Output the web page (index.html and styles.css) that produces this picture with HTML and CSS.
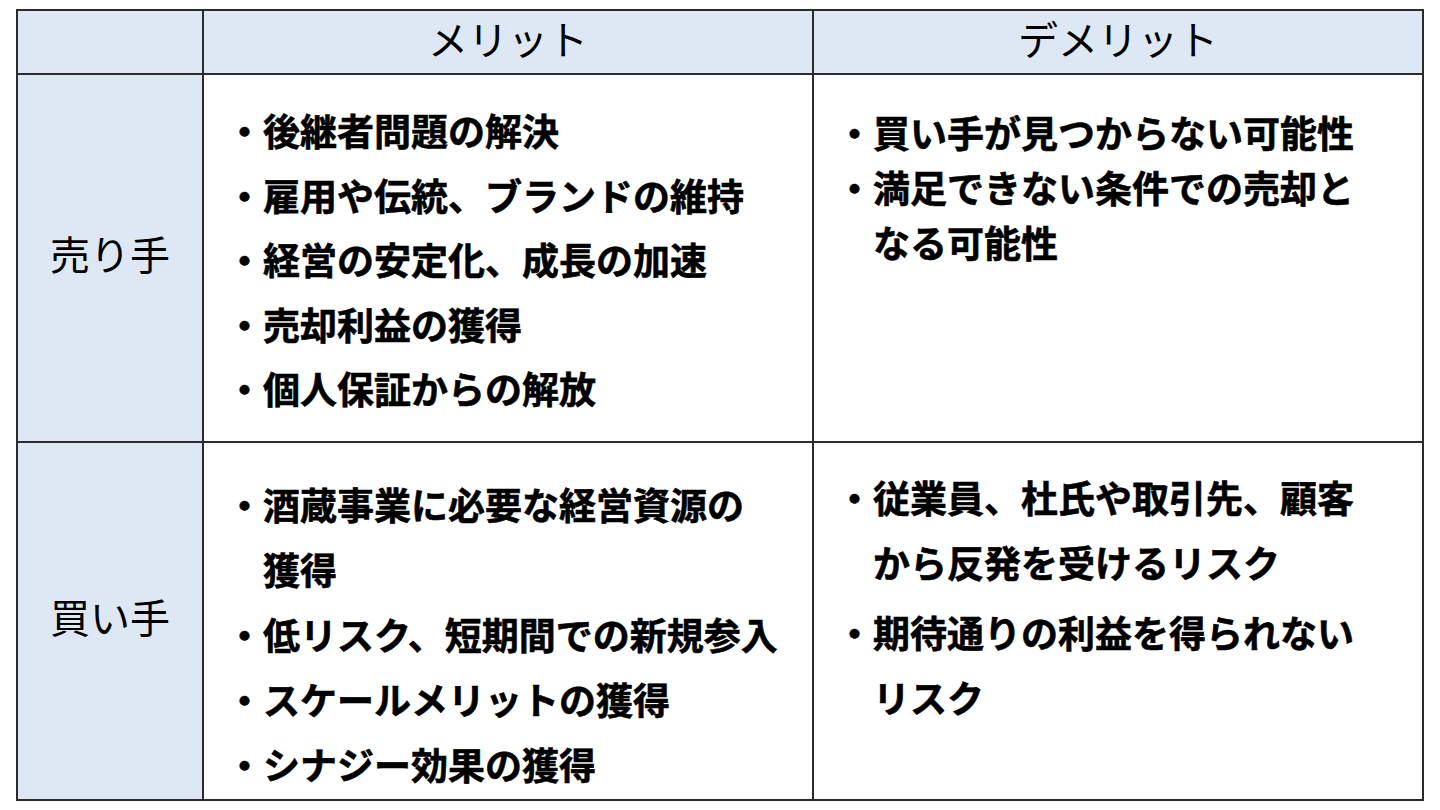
FILE: index.html
```html
<!DOCTYPE html>
<html lang="ja">
<head>
<meta charset="utf-8">
<title>メリット・デメリット</title>
<link rel="stylesheet" href="styles.css">
</head>
<body>
<div class="page">
  <div class="grid">
    <div class="cell head corner"></div>
    <div class="cell head">メリット</div>
    <div class="cell head">デメリット</div>

    <div class="cell side">売り手</div>
    <div class="cell body r1l">
      <p class="item">・後継者問題の解決</p>
      <p class="item">・雇用や伝統、ブランドの維持</p>
      <p class="item">・経営の安定化、成長の加速</p>
      <p class="item">・売却利益の獲得</p>
      <p class="item">・個人保証からの解放</p>
    </div>
    <div class="cell body r1r">
      <p class="item">・買い手が見つからない可能性</p>
      <p class="item">・満足できない条件での売却と<br>なる可能性</p>
    </div>

    <div class="cell side">買い手</div>
    <div class="cell body r2l">
      <p class="item">・酒蔵事業に必要な経営資源の<br>獲得</p>
      <p class="item">・低リスク、短期間での新規参入</p>
      <p class="item">・スケールメリットの獲得</p>
      <p class="item">・シナジー効果の獲得</p>
    </div>
    <div class="cell body r2r">
      <p class="item">・従業員、杜氏や取引先、顧客<br>から反発を受けるリスク</p>
      <p class="item">・期待通りの利益を得られない<br>リスク</p>
    </div>
  </div>
</div>
</body>
</html>
```

FILE: styles.css
```css
html, body {
  margin: 0;
  padding: 0;
  background: #ffffff;
}

.page {
  padding: 9px 16px;
  font-family: "Noto Sans CJK JP", "Noto Sans", sans-serif;
  color: #000;
}

.grid {
  display: grid;
  grid-template-columns: 186px 610px 610px;
  grid-template-rows: 64px 368px 358px;
  border-left: 2px solid #2b2b2b;
  border-top: 2px solid #2b2b2b;
  width: max-content;
}

.cell {
  box-sizing: border-box;
  border-right: 2px solid #2b2b2b;
  border-bottom: 2px solid #2b2b2b;
}

.head {
  background: #dde8f4;
  display: flex;
  align-items: center;
  justify-content: center;
  font-size: 40px;
  font-weight: 400;
  padding-bottom: 8px;
}

.side {
  background: #dde8f4;
  display: flex;
  align-items: center;
  justify-content: center;
  font-size: 40px;
  font-weight: 400;
  padding-bottom: 10px;
}

.body {
  padding-left: 22px;
  font-size: 37px;
  font-weight: 700;
  white-space: nowrap;
  -webkit-text-stroke: 0.6px #000;
}

.item {
  margin: 0;
  padding-left: 1em;
  text-indent: -1em;
}

.r1l {
  padding-top: 23px;
  line-height: 64.5px;
}

.r1r {
  padding-top: 30px;
  line-height: 55px;
}

.r2l {
  padding-top: 29px;
  line-height: 65px;
}

.r2r {
  padding-top: 22px;
  line-height: 65px;
}

.r2r .item + .item {
  margin-top: 5px;
}
```
